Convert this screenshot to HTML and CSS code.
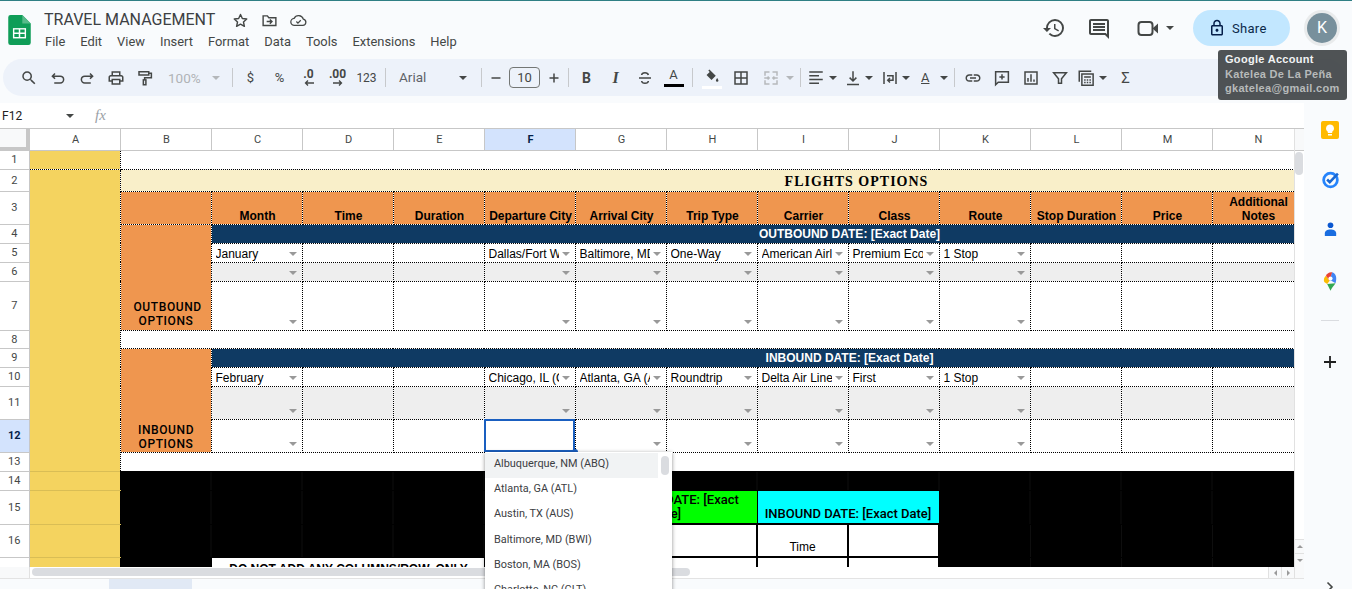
FILE: index.html
```html
<!DOCTYPE html>
<html lang="en">
<head>
<meta charset="utf-8">
<title>TRAVEL MANAGEMENT</title>
<link rel="stylesheet" href="styles.css">
</head>
<body>
<div class="page">
  <header class="appbar">
    <svg class="logo" viewBox="0 0 24 32"><path fill="#0f9d58" d="M15 0H2.5A2.5 2.5 0 0 0 0 2.5v27A2.5 2.5 0 0 0 2.5 32h19a2.5 2.5 0 0 0 2.5-2.5V9z"/><path fill="#57bb8a" d="M15 0v9h9z"/><path fill="#fff" d="M5 14h14v11H5z"/><path fill="#0f9d58" d="M6.500 15.500h4.700v3.200H6.500zM12.800 15.500h4.700v3.200h-4.700zM6.500 20.300h4.700v3.200H6.500zM12.800 20.300h4.700v3.200h-4.700z"/></svg>
    <div class="titleblock">
      <div class="titlerow">
        <span class="doc-title">TRAVEL MANAGEMENT</span>
        <svg class="ticon" viewBox="0 0 24 24"><path fill="none" stroke="#444746" stroke-width="2" stroke-linejoin="round" d="M12 3.500l2.600 5.700 6.200.7-4.600 4.200 1.300 6.100L12 17.100l-5.500 3.100 1.300-6.100-4.600-4.200 6.200-.7z"/></svg>
        <svg class="ticon" viewBox="0 0 24 24"><path fill="none" stroke="#444746" stroke-width="2" d="M3 5.500h6l2 2.500h10v11H3z"/><path fill="none" stroke="#444746" stroke-width="2" d="M8 13.500h7M12.500 10.500l3 3-3 3"/></svg>
        <svg class="ticon cloud" viewBox="0 0 24 24"><path fill="none" stroke="#444746" stroke-width="1.800" d="M6.500 19h11.500a4.500 4.500 0 0 0 .8-8.900A7 7 0 0 0 5.800 9 5 5 0 0 0 6.500 19z"/><path fill="none" stroke="#444746" stroke-width="1.800" d="M9 13.500l2.200 2.200 4-4"/></svg>
      </div>
      <nav class="menu"><span>File</span><span>Edit</span><span>View</span><span>Insert</span><span>Format</span><span>Data</span><span>Tools</span><span>Extensions</span><span>Help</span></nav>
    </div>
    <div class="actions">
      <svg class="aicon history" viewBox="0 0 24 24"><path fill="#444746" d="M13 3a9 9 0 0 0-9 9H1l3.890 3.890.07.14L9 12H6c0-3.870 3.130-7 7-7s7 3.130 7 7-3.130 7-7 7c-1.930 0-3.680-.79-4.940-2.060l-1.420 1.420A8.954 8.954 0 0 0 13 21a9 9 0 0 0 0-18zm-1 5v5l4.280 2.540.72-1.210-3.500-2.080V8H12z"/></svg>
      <svg class="aicon comment" viewBox="0 0 24 24"><path fill="#444746" d="M22 4c0-1.100-.9-2-2-2H4c-1.100 0-2 .9-2 2v12c0 1.100.9 2 2 2h14l4 4V4zm-2 13.170L18.830 16H4V4h16v13.170zM6 12h12v2H6zm0-3h12v2H6zm0-3h12v2H6z"/></svg>
      <svg class="aicon video" viewBox="0 0 24 24"><rect x="2.500" y="6" width="14" height="13" rx="3" fill="none" stroke="#444746" stroke-width="2"/><path fill="#444746" d="M16.500 12.500l5.500-5v10z"/></svg>
      <i class="caret video-caret"></i>
      <div class="share">
        <svg class="lock" viewBox="0 0 24 24"><path fill="#041e49" d="M18 8h-1V6c0-2.760-2.240-5-5-5S7 3.240 7 6v2H6c-1.100 0-2 .9-2 2v10c0 1.100.9 2 2 2h12c1.100 0 2-.9 2-2V10c0-1.100-.9-2-2-2zM9 6c0-1.660 1.340-3 3-3s3 1.340 3 3v2H9V6zm9 14H6V10h12v10zm-6-3c1.100 0 2-.9 2-2s-.9-2-2-2-2 .9-2 2 .9 2 2 2z"/></svg>
        <span>Share</span>
      </div>
      <div class="avatar"><span>K</span></div>
    </div>
  </header>

  <div class="toolbar-wrap">
    <div class="toolbar">
      <span class="tb"><svg class="ic" viewBox="0 0 24 24"><path d="M15.500 14h-.79l-.28-.27A6.471 6.471 0 0 0 16 9.500 6.500 6.500 0 1 0 9.500 16c1.610 0 3.090-.59 4.230-1.570l.27.28v.79l5 4.990L20.490 19l-4.990-5zm-6 0C7.010 14 5 11.990 5 9.500S7.010 5 9.500 5 14 7.010 14 9.500 11.990 14 9.500 14z"/></svg></span>
      <span class="tb"><svg class="ic st" viewBox="0 0 24 24"><path d="M8 6L4.500 9.500 8 13M4.500 9.500H15a4.500 4.500 0 0 1 0 9H7"/></svg></span>
      <span class="tb"><svg class="ic st" viewBox="0 0 24 24"><path d="M16 6l3.500 3.500L16 13M19.500 9.500H9a4.500 4.500 0 0 0 0 9h8"/></svg></span>
      <span class="tb"><svg class="ic" viewBox="0 0 24 24"><path d="M19 8h-1V3H6v5H5c-1.660 0-3 1.340-3 3v6h4v4h12v-4h4v-6c0-1.660-1.340-3-3-3zM8 5h8v3H8V5zm8 12v2H8v-4h8v2zm2-2v-2H6v2H4v-4c0-.55.45-1 1-1h14c.55 0 1 .45 1 1v4h-2z"/></svg></span>
      <span class="tb"><svg class="ic st" viewBox="0 0 24 24"><path d="M4 3.500h13v4.500H4zM17 5.500h3.500v6H11.500v3"/><rect x="9.800" y="14.500" width="3.400" height="6.500"/></svg></span>
      <span class="zoomctl"><span class="zoomtxt">100%</span><i class="caret muted"></i></span>
      <i class="sep s1"></i>
      <span class="tb txt">$</span>
      <span class="tb txt">%</span>
      <span class="tb dec"><b>.0</b><svg class="mini" viewBox="0 0 10 6"><path fill="none" stroke="#444746" stroke-width="1.300" d="M10 3H1.500M4 .5L1.500 3 4 5.500"/></svg></span>
      <span class="tb dec"><b>.00</b><svg class="mini" viewBox="0 0 10 6"><path fill="none" stroke="#444746" stroke-width="1.300" d="M0 3h8.500M6 .5L8.500 3 6 5.500"/></svg></span>
      <span class="tb txt small">123</span>
      <i class="sep s2"></i>
      <span class="fontsel"><span>Arial</span><i class="caret"></i></span>
      <i class="sep s3"></i>
      <span class="tb nar"><svg class="ic st" viewBox="0 0 24 24"><path d="M6 12h12"/></svg></span>
      <span class="sizebox">10</span>
      <span class="tb nar"><svg class="ic st" viewBox="0 0 24 24"><path d="M6 12h12M12 6v12"/></svg></span>
      <i class="sep s4"></i>
      <span class="tb letter bold">B</span>
      <span class="tb letter ital">I</span>
      <span class="tb"><svg class="ic st" viewBox="0 0 24 24"><path d="M4 12h16M16.500 8c-.5-2-2.200-3-4.500-3-2.500 0-4.300 1-4.500 3M7.500 16c.3 2 2 3 4.500 3s4.300-1 4.500-3"/></svg></span>
      <span class="tb textcolor"><span class="a">A</span><i class="bar"></i></span>
      <i class="sep s5"></i>
      <span class="tb fillcolor"><svg class="ic fillic" viewBox="0 0 24 24"><path d="M9 2l9 9-6 6-7-7 4.500-4.500L7.500 3.500z" fill="#444746"/><path d="M20 14c1 1.500 1.800 2.600 1.800 3.500a1.800 1.800 0 0 1-3.600 0c0-.9.800-2 1.800-3.500z" fill="#444746"/></svg><i class="bar white"></i></span>
      <span class="tb"><svg class="ic st" viewBox="0 0 24 24"><path d="M4 4h16v16H4zM12 4v16M4 12h16"/></svg></span>
      <span class="drop d-merge"><svg class="ic st gray" viewBox="0 0 24 24"><path d="M10 4H4v5M14 4h6v5M10 20H4v-5M14 20h6v-5M3 12h6M7.500 10l2 2-2 2M21 12h-6M16.500 10l-2 2 2 2"/></svg><i class="caret muted"></i></span>
      <i class="sep s6"></i>
      <span class="drop d-align"><svg class="ic st" viewBox="0 0 24 24"><path d="M3 4h18M3 9h13M3 14h18M3 19h13"/></svg><i class="caret"></i></span>
      <span class="drop d-one"><svg class="ic st" viewBox="0 0 24 24"><path d="M12 3v13M7.500 11.500L12 16l4.500-4.500M4 20.500h16"/></svg><i class="caret"></i></span>
      <span class="drop d-one wrapd"><svg class="ic st" viewBox="0 0 24 24"><path d="M4 4v16M20 4v16M8 9h8v6h-7M12 12l-3 3 3 3"/></svg><i class="caret"></i></span>
      <span class="drop d-one rot"><span class="rota">A</span><i class="caret"></i></span>
      <i class="sep s7"></i>
      <span class="tb"><svg class="ic" viewBox="0 0 24 24"><path d="M3.900 12c0-1.710 1.390-3.100 3.100-3.100h4V7H7c-2.760 0-5 2.240-5 5s2.240 5 5 5h4v-1.900H7c-1.710 0-3.100-1.390-3.100-3.100zM8 13h8v-2H8v2zm9-6h-4v1.900h4c1.710 0 3.100 1.390 3.100 3.100s-1.390 3.100-3.100 3.100h-4V17h4c2.760 0 5-2.240 5-5s-2.240-5-5-5z"/></svg></span>
      <span class="tb"><svg class="ic st" viewBox="0 0 24 24"><path d="M3.500 3.500h17v14H7l-3.500 3.500zM12 7v7M8.500 10.500h7"/></svg></span>
      <span class="tb"><svg class="ic st" viewBox="0 0 24 24"><path d="M4 4h16v16H4zM8 17v-5M12 17V7M16 17v-3"/></svg></span>
      <span class="tb"><svg class="ic st" viewBox="0 0 24 24"><path d="M3.500 5h17L14 13v6h-4v-6z"/></svg></span>
      <span class="drop d-calc"><svg class="ic st" viewBox="0 0 24 24"><path d="M3 17V3h16M6.500 6.500h15v15h-15zM9.500 10.500h9M9.500 14.500h2M13 14.500h2M16.500 14.500h2M9.500 18h2M13 18h2M16.500 18h2"/></svg><i class="caret"></i></span>
      <span class="tb nar sigma">&Sigma;</span>
    </div>
  </div>

  <div class="workspace">
    <div class="sheetcol">
      <div class="formula">
        <span class="namebox">F12</span><i class="caret fb-caret"></i><span class="fx">fx</span>
      </div>
      <div class="gridrow">
        <div class="grid">
          <table class="sheet">
            <colgroup><col class="c-rh"><col class="c"><col class="c"><col class="c"><col class="c"><col class="c"><col class="c"><col class="c"><col class="c"><col class="c"><col class="c"><col class="c"><col class="c"><col class="c"><col class="c"><col class="c"><col class="c"><col class="c"></colgroup>
            <tr class="h-head"><th class="corner"></th><th class="ch">A</th><th class="ch">B</th><th class="ch">C</th><th class="ch">D</th><th class="ch">E</th><th class="ch sel">F</th><th class="ch">G</th><th class="ch">H</th><th class="ch">I</th><th class="ch">J</th><th class="ch">K</th><th class="ch">L</th><th class="ch">M</th><th class="ch">N</th><th class="ch">O</th><th class="ch">P</th><th class="ch">Q</th></tr>
            <tr class="r19"><th class="rh">1</th><td class="yel"></td><td colspan="16" class="plain"></td></tr>
            <tr class="r22"><th class="rh">2</th><td class="yel" rowspan="12"></td><td colspan="16" class="cream">FLIGHTS OPTIONS</td></tr>
            <tr class="r33"><th class="rh">3</th><td class="org"></td><td class="org hd">Month</td><td class="org hd">Time</td><td class="org hd">Duration</td><td class="org hd">Departure City</td><td class="org hd">Arrival City</td><td class="org hd">Trip Type</td><td class="org hd">Carrier</td><td class="org hd">Class</td><td class="org hd">Route</td><td class="org hd">Stop Duration</td><td class="org hd">Price</td><td class="org hd">Additional Notes</td><td class="org"></td><td class="org"></td><td class="org"></td></tr>
            <tr class="r19"><th class="rh">4</th><td class="org opt" rowspan="4">OUTBOUND OPTIONS</td><td colspan="15" class="navy"><span class="navytxt">OUTBOUND DATE: [Exact Date]</span></td></tr>
            <tr class="r19"><th class="rh">5</th><td class="dd"><span>January</span></td><td></td><td></td><td class="dd"><span>Dallas/Fort Worth, TX (DFW)</span></td><td class="dd"><span>Baltimore, MD (BWI)</span></td><td class="dd"><span>One-Way</span></td><td class="dd"><span>American Airlines</span></td><td class="dd"><span>Premium Economy</span></td><td class="dd"><span>1 Stop</span></td><td></td><td></td><td></td><td></td><td></td><td></td></tr>
            <tr class="r19 alt"><th class="rh">6</th><td class="dd"></td><td></td><td></td><td class="dd"></td><td class="dd"></td><td class="dd"></td><td class="dd"></td><td class="dd"></td><td class="dd"></td><td></td><td></td><td></td><td></td><td></td><td></td></tr>
            <tr class="r49"><th class="rh">7</th><td class="dd"></td><td></td><td></td><td class="dd"></td><td class="dd"></td><td class="dd"></td><td class="dd"></td><td class="dd"></td><td class="dd"></td><td></td><td></td><td></td><td></td><td></td><td></td></tr>
            <tr class="r18"><th class="rh">8</th><td colspan="16" class="plain"></td></tr>
            <tr class="r19"><th class="rh">9</th><td class="org opt opt-in" rowspan="4">INBOUND OPTIONS</td><td colspan="15" class="navy"><span class="navytxt">INBOUND DATE: [Exact Date]</span></td></tr>
            <tr class="r19"><th class="rh">10</th><td class="dd"><span>February</span></td><td></td><td></td><td class="dd"><span>Chicago, IL (ORD)</span></td><td class="dd"><span>Atlanta, GA (ATL)</span></td><td class="dd"><span>Roundtrip</span></td><td class="dd"><span>Delta Air Lines</span></td><td class="dd"><span>First</span></td><td class="dd"><span>1 Stop</span></td><td></td><td></td><td></td><td></td><td></td><td></td></tr>
            <tr class="r33 alt"><th class="rh">11</th><td class="dd"></td><td></td><td></td><td class="dd"></td><td class="dd"></td><td class="dd"></td><td class="dd"></td><td class="dd"></td><td class="dd"></td><td></td><td></td><td></td><td></td><td></td><td></td></tr>
            <tr class="r33"><th class="rh sel">12</th><td class="dd"></td><td></td><td></td><td></td><td class="dd"></td><td class="dd"></td><td class="dd"></td><td class="dd"></td><td class="dd"></td><td></td><td></td><td></td><td></td><td></td><td></td></tr>
            <tr class="r19"><th class="rh">13</th><td colspan="16" class="plain"></td></tr>
            <tr class="r19"><th class="rh">14</th><td class="yel fl"></td><td colspan="16" class="blk"></td></tr>
            <tr class="r34"><th class="rh">15</th><td class="yel fl"></td><td colspan="5" class="blk"></td><td colspan="2" class="lime">OUTBOUND DATE: [Exact Date]</td><td colspan="2" class="aqua">INBOUND DATE: [Exact Date]</td><td colspan="7" class="blk"></td></tr>
            <tr class="r33"><th class="rh">16</th><td class="yel fl"></td><td colspan="5" class="blk"></td><td colspan="2" class="box"></td><td class="box lbl">Time</td><td class="box"></td><td colspan="7" class="blk"></td></tr>
            <tr class="r40"><th class="rh">17</th><td class="yel fl"></td><td class="blk"></td><td colspan="3" class="warn">DO NOT ADD ANY COLUMNS/ROW. ONLY</td><td class="blk"></td><td colspan="2" class="box"></td><td class="box"></td><td class="box"></td><td colspan="7" class="blk"></td></tr>
          </table>
          <div class="selection"><i class="handle"></i></div>
        </div>
        <div class="vscroll">
          <div class="vcap"></div>
          <div class="vthumb"></div>
          <div class="varrows"><span class="arrow-btn"><i class="tri up"></i></span><span class="arrow-btn"><i class="tri down"></i></span></div>
        </div>
      </div>
      <div class="hscroll">
        <div class="hgutter"></div>
        <div class="htrack"><div class="hthumb"></div></div>
        <span class="harrow"><i class="tri left"></i></span><span class="harrow"><i class="tri right"></i></span><span class="hcorner"></span>
      </div>
      <div class="bottombar"><div class="tab"></div></div>
    </div>
    <aside class="sidepanel">
      <svg class="side keep" viewBox="0 0 18 18"><rect width="18" height="18" rx="2" fill="#ffba00"/><path fill="#fff" d="M9 3.500a4 4 0 0 0-2.200 7.300V12h4.400v-1.200A4 4 0 0 0 9 3.500zM7 13h4v1.500H7z"/></svg>
      <svg class="side tasks" viewBox="0 0 18 18"><circle cx="9" cy="9.500" r="6.500" fill="none" stroke="#2684fc" stroke-width="2.600"/><path d="M5.800 9l2.500 2.500L16 3.500" fill="none" stroke="#1967d2" stroke-width="2.400"/></svg>
      <svg class="side contacts" viewBox="0 0 18 18"><circle cx="9" cy="4.500" r="3" fill="#0b57d0"/><path d="M3 16v-3c0-2.500 2.500-4 6-4s6 1.500 6 4v3z" fill="#1a6de0"/></svg>
      <svg class="side maps" viewBox="0 0 18 24"><path fill="#34a853" d="M5 15l4 8c1-3 4-6 6-9z"/><path fill="#fbbc04" d="M1.500 12.500L5 15l3-4-4.500-6C1 7 .5 10 1.500 12.500z"/><path fill="#ea4335" d="M3.500 5L8 11l2-5 1-5c-3-.8-5.800 1-7.500 4z"/><path fill="#4285f4" d="M11 1c4 1 6.300 6 4 13l-5-3-2 0z"/><circle cx="9" cy="8.500" r="2.500" fill="#fff"/></svg>
      <i class="sidediv"></i>
      <svg class="side plus" viewBox="0 0 14 14"><path d="M7 1v12M1 7h12" stroke="#1f1f1f" stroke-width="1.800" fill="none"/></svg>
      <svg class="side chev" viewBox="0 0 10 12"><path d="M2.500 1.500L7 6l-4.500 4.500" fill="none" stroke="#444746" stroke-width="1.600"/></svg>
    </aside>
  </div>

  <div class="tooltip">
    <div class="tt-title">Google Account</div>
    <div>Katelea De La Peña</div>
    <div>gkatelea@gmail.com</div>
  </div>

  <ul class="listmenu">
    <li class="hover">Albuquerque, NM (ABQ)</li>
    <li>Atlanta, GA (ATL)</li>
    <li>Austin, TX (AUS)</li>
    <li>Baltimore, MD (BWI)</li>
    <li>Boston, MA (BOS)</li>
    <li>Charlotte, NC (CLT)</li>
    <i class="listthumb"></i>
  </ul>
</div>
</body>
</html>
```
FILE: styles.css
```css
* { box-sizing: border-box; }
html, body { margin: 0; padding: 0; }
body { width: 1352px; height: 589px; overflow: hidden; background: #f9fbfd; font-family: Roboto, "Liberation Sans", sans-serif; color: #444746; }
.page { position: relative; width: 1352px; height: 589px; overflow: hidden; border-top: 1px solid #2f7f84; }

/* app bar */
.appbar { display: flex; height: 58px; padding-left: 8px; }
.logo { width: 23px; height: 30px; margin-top: 14px; flex: none; }
.titleblock { margin-left: 13px; }
.titlerow { display: flex; align-items: center; height: 26px; margin-top: 5px; }
.doc-title { font-size: 16px; color: #3c4043; width: 171px; white-space: nowrap; }
.ticon { width: 17px; height: 17px; margin-left: 12px; margin-top: 2px; }
.titlerow .ticon:first-of-type { margin-left: 17px; }
.menu { display: flex; gap: 15px; margin-left: 1px; margin-top: 2px; font-size: 12.900px; line-height: 16px; color: #444746; }

.actions { margin-left: auto; display: flex; align-items: flex-start; padding-right: 15px; }
.aicon { flex: none; width: 24px; height: 24px; margin-top: 15px; }
.comment { margin-left: 21px; margin-top: 16px; }
.video { margin-left: 25px; }
.video-caret { margin: 25px 0 0 6px; }
.share { display: flex; align-items: center; margin-left: 19px; margin-top: 9px; width: 97px; height: 36px; border-radius: 18px; background: #c2e7ff; padding-left: 15px; color: #0b2a4a; font-size: 13px; letter-spacing: .3px; }
.lock { width: 18px; height: 18px; margin-right: 6px; }
.avatar { margin-left: 14px; margin-right: -3px; margin-top: 9px; width: 36px; height: 36px; border-radius: 50%; background: #e9ebec; display: flex; align-items: center; justify-content: center; }
.avatar span { display: block; width: 30px; height: 30px; border-radius: 50%; background: #78909c; color: #fff; font-size: 16px; line-height: 30px; text-align: center; }

/* toolbar */
.toolbar-wrap { height: 44px; padding-left: 3px; }
.toolbar { display: flex; align-items: center; width: 1342px; height: 37px; border-radius: 19px; background: #edf2fa; padding-left: 11px; }
.tb { flex: none; width: 29px; height: 24px; display: flex; align-items: center; justify-content: center; }
.tb.nar { width: 27px; }
.ic { width: 18px; height: 18px; fill: #444746; flex: none; }
.ic.st { fill: none; stroke: #444746; stroke-width: 2; }
.ic.st.gray { stroke: #b6b9bc; }
.caret { display: block; flex: none; width: 0; height: 0; border-left: 4px solid transparent; border-right: 4px solid transparent; border-top: 4px solid #444746; }
.caret.muted { border-top-color: #b4b7ba; }
.zoomctl { flex: none; width: 66px; display: flex; align-items: center; padding-left: 9px; font-size: 13.500px; color: #b0b3b6; }
.zoomtxt { width: 44px; }
.sep { flex: none; display: block; width: 1px; height: 19px; background: #c7c9cc; }
.s1 { margin: 0 3px 0 7px; }
.s2 { margin-left: 4px; }
.s3 { margin-left: 5px; }
.s4 { margin: 0 3px 0 1px; }
.s5 { margin: 0 4px 0 4px; }
.s6 { margin-left: 2px; }
.s7 { margin: 0 3px 0 1px; }
.txt { font-size: 13px; }
.txt.small { font-size: 12px; }
.dec { flex-direction: column; gap: 0; line-height: 10px; font-size: 12px; }
.dec b { font-weight: 700; height: 11px; }
.mini { width: 10px; height: 6px; }
.fontsel { flex: none; width: 90px; padding-left: 13px; display: flex; align-items: center; font-size: 13.500px; color: #5f6368; }
.fontsel span { width: 60px; margin-top: -1px; }
.sizebox { flex: none; width: 31px; height: 21px; border: 1px solid #747775; border-radius: 4px; text-align: center; font-size: 13px; line-height: 19px; color: #444746; }
.letter { font-size: 14px; font-weight: 700; }
.ital { font-style: italic; font-family: "Liberation Serif", serif; font-size: 16px; }
.textcolor, .fillcolor { flex-direction: column; justify-content: flex-start; position: relative; }
.textcolor .a { font-size: 13px; line-height: 14px; margin-top: 2px; }
.bar { display: block; width: 20px; height: 3px; background: #000; margin-top: 2px; }
.bar.white { background: #fff; margin-top: 1px; }
.fillic { width: 17px; height: 17px; margin-top: 2px; }
.drop { flex: none; display: flex; align-items: center; height: 24px; }
.d-merge { width: 43px; padding-left: 7px; gap: 6px; }
.d-align { width: 42px; padding-left: 6px; gap: 4px; }
.d-one { width: 37px; padding-left: 1px; gap: 3px; }
.wrapd { width: 36px; }
.rot { gap: 9px; padding-left: 5px; }
.rota { font-size: 13px; width: 10px; text-decoration: underline; }
.d-calc { width: 38px; padding-left: 3px; gap: 4px; }
.sigma { font-size: 15px; }

/* workspace */
.workspace { display: flex; height: 487px; }
.sheetcol { width: 1304px; flex: none; display: flex; flex-direction: column; background: #fff; }
.sidepanel { flex: 1; display: flex; flex-direction: column; align-items: center; padding-left: 4px; background: #f9fbfd; position: relative; }
.formula { flex: none; height: 26px; display: flex; align-items: center; background: #fff; border-bottom: 1px solid #c7c7c7; font-size: 12px; color: #222; }
.namebox { margin-left: 2px; width: 64px; }
.fx { margin-left: 21px; font-family: "Liberation Serif", serif; font-style: italic; font-size: 15px; color: #9aa0a6; }

.gridrow { flex: none; height: 438px; display: flex; }
.grid { position: relative; width: 1294px; height: 438px; overflow: hidden; flex: none; background: #fff; }

/* sheet table */
.sheet { table-layout: fixed; border-collapse: collapse; width: 1576px; font-family: "Liberation Sans", Arial, sans-serif; font-size: 12px; color: #000; }
.c-rh { width: 29px; }
.c { width: 91px; }
.sheet td, .sheet th { padding: 0; overflow: hidden; font-weight: 400; }
.sheet td { border: 1px dotted #000; }
.h-head { height: 21px; }
.r18 { height: 18px; } .r19 { height: 19px; } .r22 { height: 22px; } .r33 { height: 33px; } .r34 { height: 34px; } .r40 { height: 40px; } .r49 { height: 49px; }
.corner { background: #f8f9fa; box-shadow: inset -3px -3px 0 #c7c7c7; border-right: 1px solid #c7c7c7; border-bottom: 1px solid #c7c7c7; }
.sheet .ch { font-family: Roboto, sans-serif; font-size: 11px; color: #444746; background: #fff; border-right: 1px solid #c7c7c7; border-bottom: 1px solid #c7c7c7; padding-left: 2px; }
.sheet .rh { font-family: Roboto, sans-serif; font-size: 11px; color: #444746; background: #fff; border-right: 1px solid #c7c7c7; border-bottom: 1px solid #c7c7c7; }
.sheet th.sel { background: #d3e3fd; font-weight: 700; color: #041e49; }
.sheet td.yel { background: #f4d35f; }
.sheet td.yel.fl { border: 1px solid #d9bd55; border-left-color: #c7c7c7; border-right-color: #000; }
.sheet td.cream { background: #f9efc9; font-family: "Liberation Serif", serif; font-weight: 700; font-size: 14px; letter-spacing: 1px; text-align: center; padding: 3px 0 0 17px; vertical-align: middle; }
.sheet td.org { background: #ef964f; }
.sheet td.hd { font-weight: 700; text-align: center; vertical-align: bottom; line-height: 14px; white-space: normal; padding: 0 1px 1px 3px; }
.sheet td.opt { font-family: Roboto, sans-serif; font-weight: 500; text-align: center; vertical-align: bottom; line-height: 14px; letter-spacing: .6px; padding: 0 12px 2px 13px; }
.sheet td.opt-in { padding-bottom: 1px; }
.sheet td.navy { background: #0f3a63; color: #fff; font-weight: 700; text-align: center; vertical-align: middle; padding-top: 1px; }
.navytxt { display: block; width: 1276px; text-align: center; }
.alt td { background: #eeeeee; }
.sheet td.dd { position: relative; vertical-align: middle; padding-top: 2px; }
.dd span { display: block; margin-left: 4px; width: 70px; overflow: hidden; white-space: nowrap; line-height: 16px; }
.dd::after { content: ""; position: absolute; right: 5px; bottom: 6px; width: 0; height: 0; border-left: 4px solid transparent; border-right: 4px solid transparent; border-top: 4px solid #999; }
.sheet td.plain { background: #fff; border-left: 1px dotted #000; }
.sheet td.blk { background-color: #000; background-image: repeating-linear-gradient(90deg, transparent 0 90px, #0e0e0e 90px 91px); border: 1px solid #000; }
.sheet td.lime, .sheet td.aqua { font-family: Roboto, sans-serif; font-weight: 500; font-size: 13px; text-align: center; vertical-align: bottom; line-height: 14px; padding: 0 2px 2px; border: 1px solid #000; }
.sheet td.lime { background: #00ff00; }
.sheet td.aqua { background: #00ffff; }
.sheet td.box { background: #fff; border: 2px solid #000; }
.sheet td.lbl { text-align: center; vertical-align: bottom; font-size: 12px; padding-bottom: 2px; }
.sheet td.warn { background: #fff; border: 1px solid #000; font-weight: 700; text-align: center; vertical-align: top; padding: 4px 0 0 2px; white-space: nowrap; }

/* selection */
.selection { position: absolute; left: 484px; top: 290px; width: 91px; height: 33px; border: 2px solid #1a5fc0; }
.handle { position: absolute; right: -5px; bottom: -5px; display: block; width: 6px; height: 6px; background: #1a5fc0; border-radius: 50%; }

/* scrollbars */
.vscroll { flex: none; width: 10px; height: 438px; display: flex; flex-direction: column; background: #fff; border-left: 1px solid #e1e1e1; }
.vcap { flex: none; height: 22px; background: #f8f9fa; border-bottom: 1px solid #c7c7c7; }
.vthumb { flex: none; width: 8px; height: 23px; margin-top: 1px; border-radius: 4px; background: #dadce0; }
.varrows { margin-top: auto; }
.arrow-btn { display: flex; height: 14px; align-items: center; justify-content: center; border-top: 1px solid #e1e1e1; background: #f8f9fa; }
.tri { display: block; width: 0; height: 0; border: 3px solid transparent; }
.tri.up { border-bottom-color: #9a9a9a; border-top-width: 0; }
.tri.down { border-top-color: #9a9a9a; border-bottom-width: 0; }
.tri.left { border-right-color: #9a9a9a; border-left-width: 0; }
.tri.right { border-left-color: #9a9a9a; border-right-width: 0; }
.hscroll { flex: none; height: 11px; display: flex; background: #f8f9fa; }
.hgutter { width: 30px; flex: none; border-right: 1px solid #e1e1e1; }
.htrack { flex: 1; padding: 1px 0 0 2px; background: #fff; }
.hthumb { width: 658px; height: 8px; border-radius: 4px; background: #dadce0; }
.harrow { flex: none; width: 13px; display: flex; align-items: center; justify-content: center; border-left: 1px solid #e1e1e1; background: #f8f9fa; }
.hcorner { flex: none; width: 10px; border-left: 1px solid #e1e1e1; }
.bottombar { flex: 1; background: #f9fbfd; border-top: 1px solid #e3e3e3; padding-left: 109px; }
.tab { width: 83px; height: 100%; background: #e1e9f5; }

/* side panel */
.side { display: block; flex: none; }
.keep { width: 18px; height: 18px; margin-top: 18px; }
.tasks { width: 19px; height: 19px; margin-top: 31px; }
.contacts { width: 17px; height: 17px; margin-top: 32px; }
.maps { width: 15px; height: 21px; margin-top: 33px; }
.sidediv { display: block; width: 18px; height: 1px; background: #dadce0; margin-top: 28px; }
.plus { width: 14px; height: 14px; margin-top: 34px; }
.chev { position: absolute; left: 21px; bottom: -3px; width: 10px; height: 12px; }

/* tooltip */
.tooltip { position: absolute; left: 1218px; top: 49px; width: 129px; height: 50px; border-radius: 3px; padding: 2px 7px; background: rgba(60,64,67,.9); color: #b7baba; font-family: "Liberation Sans", Arial, sans-serif; font-size: 11px; font-weight: 700; line-height: 14.500px; letter-spacing: .3px; white-space: nowrap; }
.tt-title { color: #f1f3f4; }

/* dropdown list */
.listmenu { position: absolute; left: 485px; top: 451px; width: 187px; height: 150px; margin: 0; padding: 1px 0 0; list-style: none; background: #fff; box-shadow: 0 1px 4px rgba(0,0,0,.45); font-size: 10.900px; color: #3c4043; }
.listmenu li { height: 25.200px; line-height: 21.500px; padding-left: 9px; width: 173px; }
.listmenu li.hover { background: #f1f3f4; }
.listthumb { position: absolute; right: 3px; top: 4px; width: 8px; height: 19px; border-radius: 4px; background: #dadce0; }
```
